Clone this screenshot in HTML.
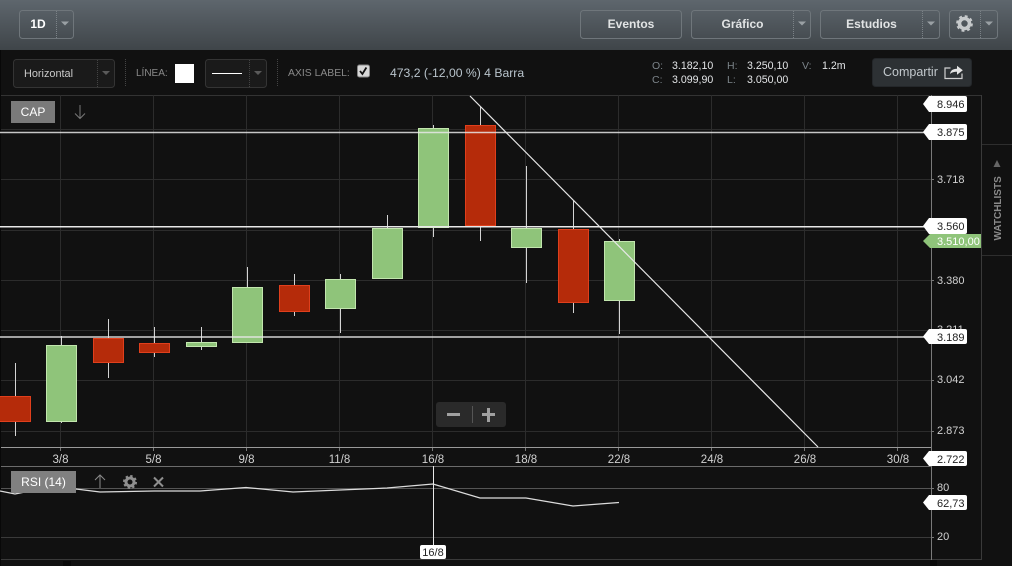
<!DOCTYPE html>
<html><head><meta charset="utf-8"><style>
html,body{margin:0;padding:0;background:#111;width:1012px;height:566px;overflow:hidden}
svg{display:block}
text{font-family:"Liberation Sans",Arial,sans-serif}
</style></head><body>
<svg width="1012" height="566" viewBox="0 0 1012 566" xmlns="http://www.w3.org/2000/svg">
<defs>
<linearGradient id="hd" x1="0" y1="0" x2="0" y2="1"><stop offset="0" stop-color="#5e666d"/><stop offset="1" stop-color="#3f4549"/></linearGradient>
</defs>
<rect width="1012" height="566" fill="#111"/>
<rect width="1012" height="50" fill="url(#hd)"/>

<!-- header buttons -->
<g fill="none" stroke="#6f767b">
<rect x="19.5" y="10.5" width="54" height="28" rx="3"/>
<rect x="580.5" y="10.5" width="101" height="28" rx="3"/>
<rect x="691.5" y="10.5" width="119" height="28" rx="3"/>
<rect x="820.5" y="10.5" width="119" height="28" rx="3"/>
<rect x="949.5" y="10.5" width="48" height="28" rx="3"/>
</g>
<g stroke="#7b8287" stroke-dasharray="1 1">
<line x1="56.5" y1="11" x2="56.5" y2="38"/>
<line x1="793.5" y1="11" x2="793.5" y2="38"/>
<line x1="922.5" y1="11" x2="922.5" y2="38"/>
<line x1="980.5" y1="11" x2="980.5" y2="38"/>
</g>
<g fill="#9aa0a4">
<path d="M61 21.5h8l-4 4z"/><path d="M798 21.5h8l-4 4z"/><path d="M927 21.5h8l-4 4z"/><path d="M985 21.5h8l-4 4z"/>
</g>
<g font-size="12" font-weight="bold" fill="#e2e4e5" text-anchor="middle">
<text x="38" y="28" fill="#fff">1D</text>
<text x="631" y="28">Eventos</text>
<text x="742.5" y="28">Gráfico</text>
<text x="871.5" y="28">Estudios</text>
</g>
<g transform="translate(964.5,23.5)">
<circle r="5" fill="none" stroke="#c6c9cb" stroke-width="3.6"/>
<circle r="7.2" fill="none" stroke="#c6c9cb" stroke-width="2.4" stroke-dasharray="2.83 2.83"/>
</g>

<!-- toolbar -->
<rect x="13.5" y="59.5" width="101" height="28" rx="3" fill="#1a1a1a" stroke="#343434"/>
<rect x="205.5" y="59.5" width="61" height="28" rx="3" fill="#1a1a1a" stroke="#343434"/>
<g stroke="#444" stroke-dasharray="1 1">
<line x1="97.5" y1="60" x2="97.5" y2="87"/>
<line x1="249.5" y1="60" x2="249.5" y2="87"/>
<line x1="125.5" y1="59" x2="125.5" y2="87"/>
<line x1="277.5" y1="59" x2="277.5" y2="87"/>
</g>
<path d="M102 71h8l-4 4z" fill="#5a5a5a"/><path d="M254 71h8l-4 4z" fill="#5a5a5a"/>
<text x="24" y="77" font-size="10.9" fill="#c9c9c9">Horizontal</text>
<text x="136" y="76" font-size="10" fill="#8a8a8a">LÍNEA:</text>
<rect x="175" y="64" width="19" height="19" fill="#fff"/>
<line x1="212" y1="73.5" x2="242" y2="73.5" stroke="#fff"/>
<text x="288" y="76" font-size="10.4" fill="#8a8a8a">AXIS LABEL:</text>
<rect x="357.5" y="65" width="12" height="12" rx="2" fill="#d8d8d8" stroke="#888"/>
<path d="M360 71l2.4 3 4-6.500" fill="none" stroke="#111" stroke-width="1.800"/>
<text x="390" y="77" font-size="12.2" fill="#b9c4cc">473,2 (-12,00 %) 4 Barra</text>

<g font-size="10.5" fill="#7d858b">
<text x="652" y="69">O:</text><text x="652" y="83">C:</text>
<text x="727" y="69">H:</text><text x="727" y="83">L:</text>
<text x="802" y="69">V:</text>
</g>
<g font-size="10.6" fill="#e4e6e8">
<text x="672" y="69">3.182,10</text><text x="672" y="83">3.099,90</text>
<text x="747" y="69">3.250,10</text><text x="747" y="83">3.050,00</text>
<text x="822" y="69">1.2m</text>
</g>
<rect x="872.5" y="58.5" width="99" height="28" rx="3" fill="#2d3134" stroke="#24272a"/>
<text x="883" y="76" font-size="12.5" fill="#c2c8cc">Compartir</text>
<path d="M950.500 68h-5.500v10.500h17v-5" fill="none" stroke="#d0d0d0" stroke-width="1.200"/>
<path d="M950 74c.5-3.500 3-5.200 7-5.200v-3l5.800 4.500-5.800 4.500v-3c-3 0-5 .5-7 2.200z" fill="#e4e4e4"/>

<!-- grid -->
<g stroke="#2c2c2c" fill="none">
<line x1="1" y1="95.500" x2="981" y2="95.500" stroke="#333"/>
<line x1="1" y1="129.500" x2="931" y2="129.500"/>
<line x1="1" y1="179.500" x2="931" y2="179.500"/>
<line x1="1" y1="230.500" x2="931" y2="230.500"/>
<line x1="1" y1="280.500" x2="931" y2="280.500"/>
<line x1="1" y1="330.500" x2="931" y2="330.500"/>
<line x1="1" y1="380.500" x2="931" y2="380.500"/>
<line x1="1" y1="431.500" x2="931" y2="431.500"/>
<line x1="60.500" y1="95" x2="60.500" y2="447"/>
<line x1="153.500" y1="95" x2="153.500" y2="447"/>
<line x1="246.500" y1="95" x2="246.500" y2="447"/>
<line x1="339.500" y1="95" x2="339.500" y2="447"/>
<line x1="432.500" y1="95" x2="432.500" y2="447"/>
<line x1="525.500" y1="95" x2="525.500" y2="447"/>
<line x1="618.500" y1="95" x2="618.500" y2="447"/>
<line x1="711.500" y1="95" x2="711.500" y2="447"/>
<line x1="804.500" y1="95" x2="804.500" y2="447"/>
<line x1="897.500" y1="95" x2="897.500" y2="447"/>
</g>
<g stroke="#777">
<line x1="60.500" y1="447" x2="60.500" y2="451"/><line x1="153.500" y1="447" x2="153.500" y2="451"/><line x1="246.500" y1="447" x2="246.500" y2="451"/><line x1="339.500" y1="447" x2="339.500" y2="451"/><line x1="432.500" y1="447" x2="432.500" y2="451"/><line x1="525.500" y1="447" x2="525.500" y2="451"/><line x1="618.500" y1="447" x2="618.500" y2="451"/><line x1="711.500" y1="447" x2="711.500" y2="451"/><line x1="804.500" y1="447" x2="804.500" y2="451"/><line x1="897.500" y1="447" x2="897.500" y2="451"/>
<line x1="931" y1="179.500" x2="934" y2="179.500"/><line x1="931" y1="280.500" x2="934" y2="280.500"/><line x1="931" y1="380.500" x2="934" y2="380.500"/><line x1="931" y1="431.500" x2="934" y2="431.500"/><line x1="931" y1="488.500" x2="934" y2="488.500"/><line x1="931" y1="537.500" x2="934" y2="537.500"/>
</g>
<line x1="1" y1="447.500" x2="931" y2="447.500" stroke="#999"/>
<line x1="1" y1="466.500" x2="931" y2="466.500" stroke="#6c6c6c"/>
<line x1="1" y1="488.500" x2="931" y2="488.500" stroke="#555"/>
<line x1="1" y1="537.500" x2="931" y2="537.500" stroke="#3a3a3a"/>
<line x1="1" y1="559.500" x2="981" y2="559.500" stroke="#3a3a3a"/>
<line x1="931.500" y1="95" x2="931.500" y2="560" stroke="#7a7a7a"/>
<line x1="981.500" y1="95" x2="981.500" y2="560" stroke="#3a3a3a"/>
<rect x="0" y="50" width="1" height="516" fill="#080808"/>
<rect x="63" y="561" width="8" height="5" fill="#090909"/>
<rect x="930" y="560" width="7" height="6" fill="#090909"/>

<!-- wicks -->
<g stroke="#d4d4d4" stroke-width="1">
<line x1="15.500" y1="363" x2="15.500" y2="436"/>
<line x1="61.500" y1="336" x2="61.500" y2="423"/>
<line x1="108.500" y1="319" x2="108.500" y2="378"/>
<line x1="154.500" y1="327" x2="154.500" y2="357"/>
<line x1="201.500" y1="327" x2="201.500" y2="350"/>
<line x1="247.500" y1="267" x2="247.500" y2="342"/>
<line x1="294.500" y1="274" x2="294.500" y2="316"/>
<line x1="340.500" y1="274" x2="340.500" y2="333"/>
<line x1="387.500" y1="215" x2="387.500" y2="228"/>
<line x1="433.500" y1="125" x2="433.500" y2="237"/>
<line x1="480.500" y1="107" x2="480.500" y2="241"/>
<line x1="526.500" y1="166" x2="526.500" y2="283"/>
<line x1="573.500" y1="200" x2="573.500" y2="313"/>
<line x1="619.500" y1="239" x2="619.500" y2="334"/>
</g>
<!-- candles -->
<g fill="#8fc47a" stroke="#c2e6ae">
<rect x="46.500" y="345.500" width="30" height="76"/>
<rect x="186.500" y="342.500" width="30" height="4"/>
<rect x="232.500" y="287.500" width="30" height="55"/>
<rect x="325.500" y="279.500" width="30" height="29"/>
<rect x="372.500" y="228.500" width="30" height="50"/>
<rect x="418.500" y="128.500" width="30" height="99"/>
<rect x="511.500" y="228.500" width="30" height="19"/>
<rect x="604.500" y="241.500" width="30" height="59"/>
</g>
<g fill="#b52b0a" stroke="#e03f1c">
<rect x="-5" y="396.500" width="35.500" height="25"/>
<rect x="93.500" y="338.500" width="30" height="24"/>
<rect x="139.500" y="343.500" width="30" height="9"/>
<rect x="279.500" y="285.500" width="30" height="26"/>
<rect x="465.500" y="125.500" width="30" height="100"/>
<rect x="558.500" y="229.500" width="30" height="73"/>
</g>

<!-- drawings -->
<g stroke="#e8e8e8" fill="none">
<line x1="0" y1="132.500" x2="925" y2="132.500" stroke-width="1.500" opacity=".85"/>
<line x1="0" y1="226.800" x2="925" y2="226.800" stroke-width="1.500"/>
<line x1="0" y1="337" x2="925" y2="337" stroke-width="1.500" opacity=".9"/>
<line x1="470" y1="96" x2="818" y2="447" stroke-width="1.200"/>
</g>

<!-- CAP -->
<rect x="11" y="101" width="44" height="22" fill="#7a7a7a"/>
<text x="33" y="116" font-size="12" fill="#fff" text-anchor="middle">CAP</text>
<path d="M80 105v13.500M75 113.500l5 5 5-5" fill="none" stroke="#777" stroke-width="1"/>

<!-- zoom -->
<rect x="436" y="402" width="70" height="25" rx="3" fill="#2a2a2a"/>
<rect x="447" y="413" width="13" height="3" fill="#a0a0a0"/>
<rect x="472" y="406" width="1" height="17" fill="#555"/>
<path d="M482 413h5v-5h3v5h5v3h-5v6h-3v-6h-5z" fill="#a0a0a0"/>

<!-- x labels -->
<g font-size="11.5" fill="#d2d2d2" text-anchor="middle">
<text x="60.500" y="463">3/8</text><text x="153.500" y="463">5/8</text><text x="246.500" y="463">9/8</text><text x="339.500" y="463">11/8</text><text x="433" y="463">16/8</text><text x="526" y="463">18/8</text><text x="619" y="463">22/8</text><text x="712" y="463">24/8</text><text x="805" y="463">26/8</text><text x="898" y="463">30/8</text>
</g>

<!-- RSI -->
<polyline points="0,491 15,494 30,491 61,490 76,489 100,492 154,491 200,491 246,487.500 293,492 340,490 387,488 433,484 480,498 526,498 573,506 619,502.500" fill="none" stroke="#dcdcdc" stroke-width="1.200"/>
<rect x="11" y="471" width="65" height="22" fill="#808080"/>
<text x="43.500" y="486" font-size="12" fill="#fff" text-anchor="middle">RSI (14)</text>
<path d="M100 488v-13M95 480l5-5 5 5" fill="none" stroke="#8a8a8a" stroke-width="1"/>
<g transform="translate(130,482)">
<circle r="4" fill="none" stroke="#8f8f8f" stroke-width="3"/>
<circle r="6" fill="none" stroke="#8f8f8f" stroke-width="2" stroke-dasharray="2.360 2.360"/>
</g>
<path d="M154 477.500l9 9M163 477.500l-9 9" stroke="#8f8f8f" stroke-width="2"/>

<line x1="433.500" y1="466" x2="433.500" y2="546" stroke="#e8e8e8"/>
<rect x="420" y="545" width="26" height="14" rx="2" fill="#fff"/>
<text x="433" y="556" font-size="11" fill="#222" text-anchor="middle">16/8</text>

<!-- y labels -->
<g font-size="11" fill="#d2d2d2">
<text x="937" y="183">3.718</text><text x="937" y="284">3.380</text><text x="937" y="333">3.211</text><text x="937" y="383">3.042</text><text x="937" y="434">2.873</text><text x="937" y="491">80</text><text x="937" y="540">20</text>
</g>
<g fill="#fff">
<path d="M929 96h36a2 2 0 0 1 2 2v12a2 2 0 0 1-2 2h-36l-6-8z"/>
<path d="M929 124h36a2 2 0 0 1 2 2v12a2 2 0 0 1-2 2h-36l-6-8z"/>
<path d="M929 218h36a2 2 0 0 1 2 2v12a2 2 0 0 1-2 2h-36l-6-8z"/>
<path d="M929 329h36a2 2 0 0 1 2 2v11a2 2 0 0 1-2 2h-36l-6-7.500z"/>
<path d="M929 451h36a2 2 0 0 1 2 2v11a2 2 0 0 1-2 2h-36l-6-7.500z"/>
<path d="M929 495h36a2 2 0 0 1 2 2v11a2 2 0 0 1-2 2h-36l-6-7.500z"/>
</g>
<path d="M930 234h51v14h-51l-7-7z" fill="#8fc47a"/>
<g font-size="11" fill="#222">
<text x="937" y="108">8.946</text><text x="937" y="136">3.875</text><text x="937" y="230">3.560</text><text x="937" y="341">3.189</text><text x="937" y="463">2.722</text><text x="937" y="507">62,73</text>
</g>
<text x="937" y="245" font-size="11" fill="#fff">3.510,00</text>

<!-- watchlists -->
<line x1="982" y1="144.500" x2="1012" y2="144.500" stroke="#2e2e2e"/>
<line x1="982" y1="255.500" x2="1012" y2="255.500" stroke="#2e2e2e"/>
<path d="M997 160l-3.500 7h7z" fill="#666"/>
<text transform="translate(1001,240.500) rotate(-90)" font-size="10" font-weight="bold" fill="#8a8a8a">WATCHLISTS</text>
</svg>
</body></html>
